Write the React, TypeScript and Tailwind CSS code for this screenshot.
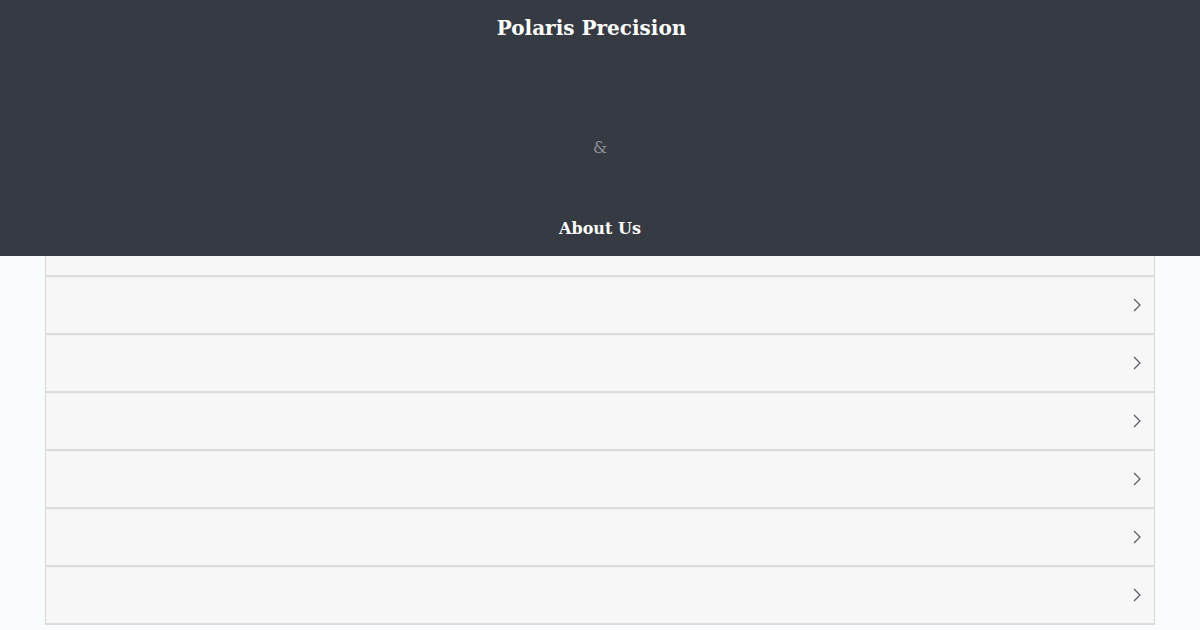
import React from "react";

const Chevron = () => (
  <svg width="10" height="16" viewBox="0 0 10 16" fill="none" className="mb-[2px]">
    <path d="M2 2 L8 8 L2 14" stroke="#555a60" strokeWidth="1.2" />
  </svg>
);

export default function App() {
  const rows = [0, 1, 2, 3, 4, 5];
  return (
    <div className="min-h-[630px] w-[1200px] overflow-hidden bg-[#f8fcfd]" style={{ fontFamily: '"DejaVu Serif", serif' }}>
      <header className="relative z-10 flex h-[256px] flex-col items-center bg-[#363a42]">
        <h1 className="mt-[13px] mr-[17px] text-[20px] font-bold leading-[30px] text-white">Polaris Precision</h1>
        <div className="mt-[95px] text-[16px] leading-[20px] text-[#8c9098]">&amp;</div>
        <h2 className="mt-[59px] text-[16px] font-bold leading-[24px] text-white">About Us</h2>
      </header>
      <div className="relative z-0 mx-[45px] -mt-[37px] flex flex-col">
        {[-1, ...rows].map((r) => (
          <div
            key={r}
            className="flex h-[58px] items-center justify-end border-x border-t border-b-2 border-x-[#d6d6d6] border-t-[#f0f0f0] border-b-[#dcdcdc] bg-[#f7f7f7] pr-[12px]"
          >
            <Chevron />
          </div>
        ))}
      </div>
    </div>
  );
}
